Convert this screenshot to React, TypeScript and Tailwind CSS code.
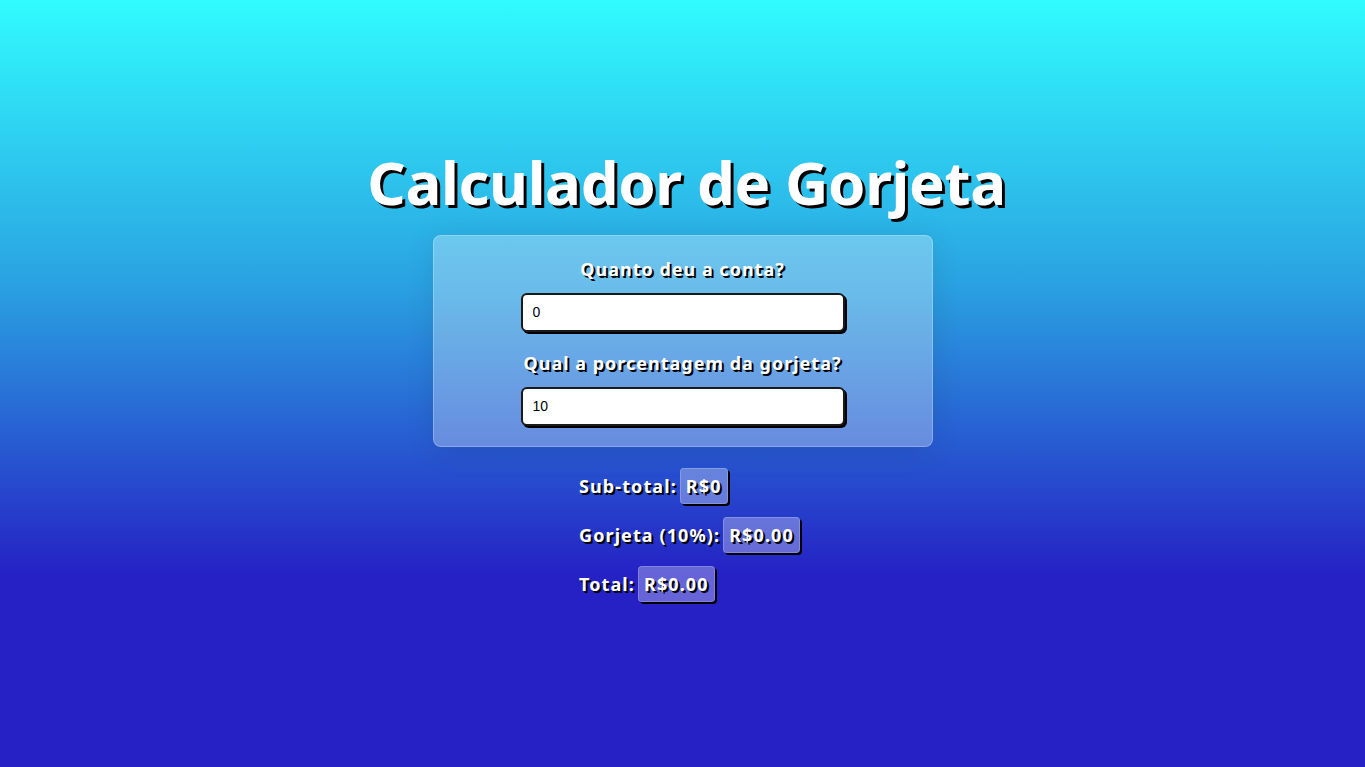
import React from "react";

const font = { fontFamily: '"Noto Sans", "Open Sans", sans-serif' };

function Badge({ children }: { children: React.ReactNode }) {
  return (
    <span className="inline-block rounded-[4px] border border-white/20 bg-white/30 px-[5px] py-[5px] shadow-[2px_2px_0_#000] [text-shadow:2px_2px_0_#000]">
      {children}
    </span>
  );
}

export default function App() {
  return (
    <div
      className="flex min-h-screen flex-col items-center justify-center bg-[linear-gradient(180deg,#31fbfe_0%,#2aa2e2_37%,#2521c4_75%,#2521c4_100%)] pb-[20px] text-white"
      style={font}
    >
      <h1 className="mb-[17px] ml-[8px] text-[60px] font-bold leading-[72px] tracking-[-0.4px] [text-shadow:3px_3px_0_#000]">
        Calculador de Gorjeta
      </h1>
      <div className="flex w-[500px] flex-col items-center rounded-[8px] border border-white/25 bg-white/30 px-[20px] pb-[20px] pt-[21px] shadow-[0_4px_30px_rgba(0,0,0,0.1)]">
        <label className="text-[18px] font-bold leading-[24px] tracking-[1px] [text-shadow:2px_2px_0_#000]">
          Quanto deu a conta?
        </label>
        <input
          defaultValue="0"
          className="mt-[12px] h-[39px] w-[324px] rounded-[6px] border-2 border-[#1a1a1a] bg-white px-[10px] text-[14px] text-black shadow-[2px_2px_0_#000] outline-none"
          style={{ fontFamily: '"Liberation Sans", Arial, sans-serif' }}
        />
        <label className="mt-[19px] text-[18px] font-bold leading-[24px] tracking-[1px] [text-shadow:2px_2px_0_#000]">
          Qual a porcentagem da gorjeta?
        </label>
        <input
          defaultValue="10"
          className="mt-[12px] h-[39px] w-[324px] rounded-[6px] border-2 border-[#1a1a1a] bg-white px-[10px] text-[14px] text-black shadow-[2px_2px_0_#000] outline-none"
          style={{ fontFamily: '"Liberation Sans", Arial, sans-serif' }}
        />
      </div>
      <div className="ml-[11px] mt-[21px] flex w-[218px] flex-col items-start gap-[13px] whitespace-nowrap text-[18px] font-bold leading-[24px] tracking-[1.1px]">
        <p className="flex items-center gap-[3px] [text-shadow:2px_2px_0_#000]">
          <span>Sub-total:</span>
          <Badge>R$0</Badge>
        </p>
        <p className="flex items-center gap-[3px] [text-shadow:2px_2px_0_#000]">
          <span>Gorjeta (10%):</span>
          <Badge>R$0.00</Badge>
        </p>
        <p className="flex items-center gap-[3px] [text-shadow:2px_2px_0_#000]">
          <span>Total:</span>
          <Badge>R$0.00</Badge>
        </p>
      </div>
    </div>
  );
}
